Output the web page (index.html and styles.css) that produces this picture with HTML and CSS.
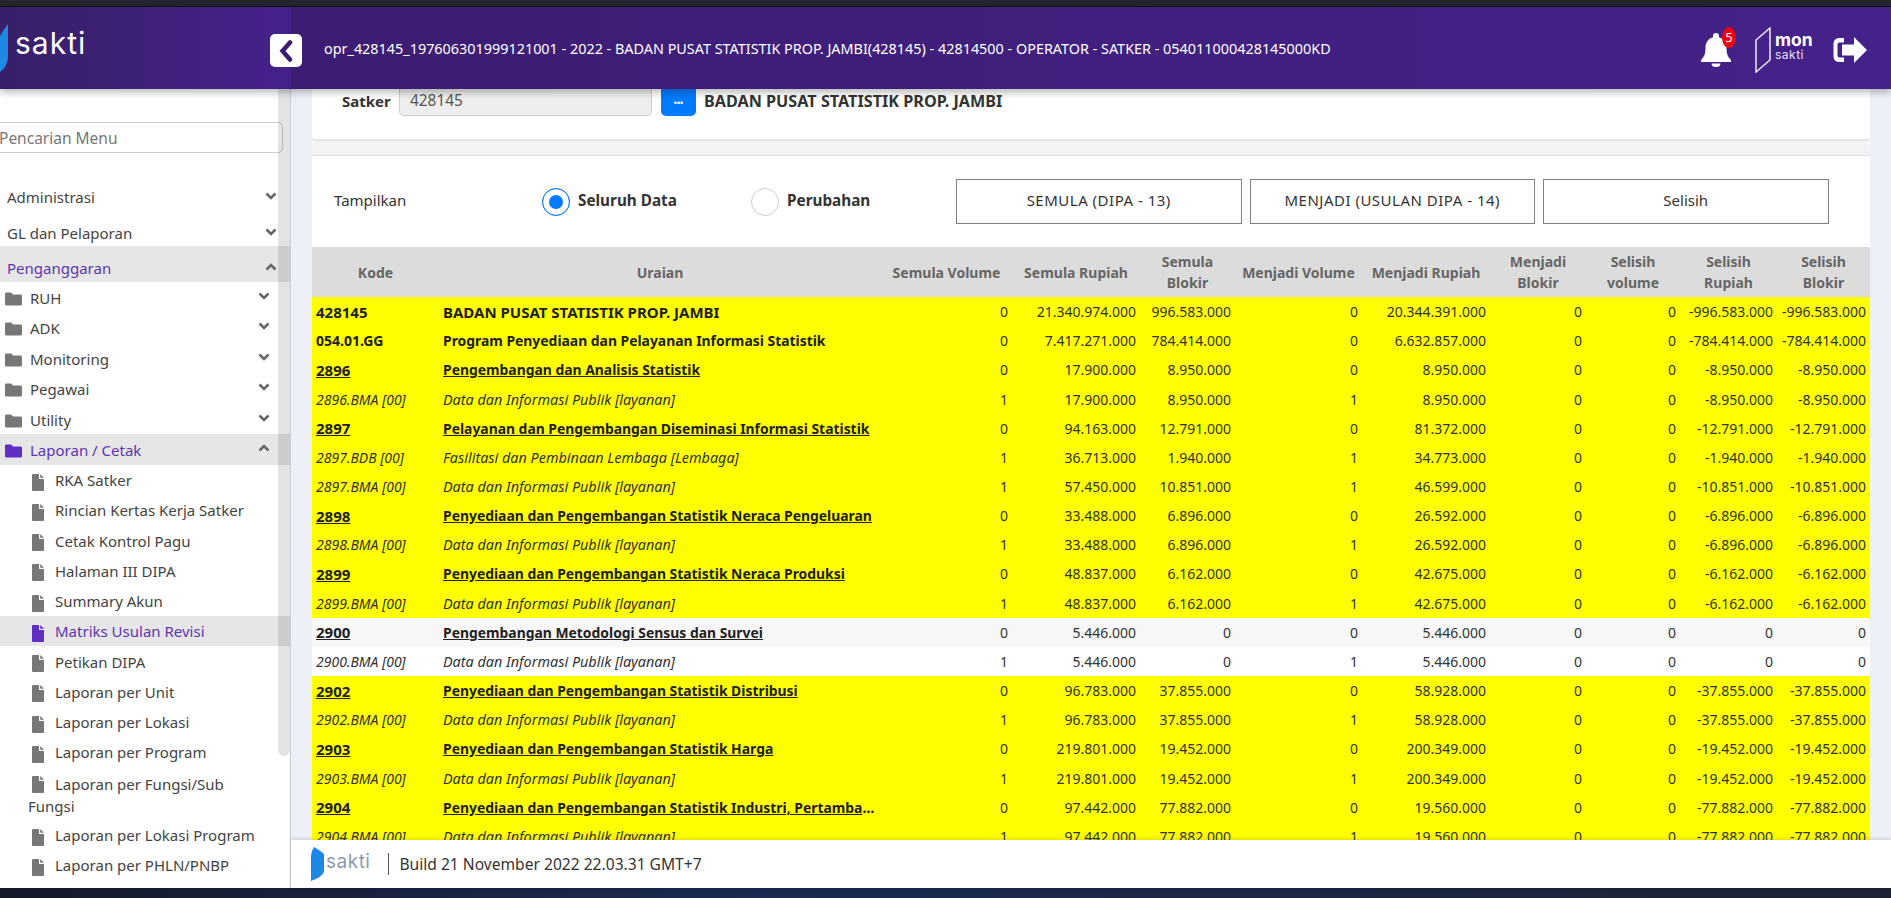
FILE: index.html
```html
<!DOCTYPE html>
<html lang="id">
<head>
    <meta charset="UTF-8">
    <title>SAKTI - Matriks Usulan Revisi</title>
    <link rel="stylesheet" href="styles.css">
</head>
<body>
    <svg class="icon-defs" width="0" height="0">
        <symbol id="i-down" viewBox="0 0 12 8"><path d="M1.5 1.500L6 6l4.500-4.500" fill="none" stroke="currentColor" stroke-width="2.600"/></symbol>
        <symbol id="i-up" viewBox="0 0 12 8"><path d="M1.500 6.500L6 2l4.500 4.500" fill="none" stroke="currentColor" stroke-width="2.600"/></symbol>
        <symbol id="i-folder" viewBox="0 0 18 14"><path d="M1.500 0h5l2 2.200h8A1.500 1.500 0 0 1 18 3.700v8.800A1.500 1.500 0 0 1 16.500 14h-15A1.500 1.500 0 0 1 0 12.500v-11A1.500 1.500 0 0 1 1.500 0z" fill="currentColor"/></symbol>
        <symbol id="i-file" viewBox="0 0 12 17"><path d="M0 1a1 1 0 0 1 1-1h6v5h5v11a1 1 0 0 1-1 1H1a1 1 0 0 1-1-1zM8.200 0L12 3.800H8.200z" fill="currentColor"/></symbol>
    </svg>

    <div class="strip-top"></div>

    <header class="topbar">
        <div class="brand">
            <svg class="brand-leaf" width="8" height="48" viewBox="0 0 8 48"><path d="M8 0v34q-1 9-8 14V12q4-7 8-12z" fill="#1e88e5"/></svg>
            <span class="brand-name">sakti</span>
            <button class="toggle">
                <svg width="16" height="22" viewBox="0 0 16 22"><path d="M12 2.500L4.500 11l7.500 8.500" fill="none" stroke="#3a1d6e" stroke-width="4.500" stroke-linecap="round"/></svg>
            </button>
        </div>
        <div class="user-info">opr_428145_197606301999121001 - 2022 - BADAN PUSAT STATISTIK PROP. JAMBI(428145) - 42814500 - OPERATOR - SATKER - 054011000428145000KD</div>
        <div class="top-actions">
            <div class="bell">
                <svg width="30" height="34" viewBox="0 0 30 34"><path d="M15 0a3 3 0 0 1 3 3v1.200C23 5.500 25.500 10 25.500 15c0 6 1.500 9 4.500 12v2H0v-2c3-3 4.500-6 4.500-12 0-5 2.500-9.500 7.500-10.800V3a3 3 0 0 1 3-3zM10.500 30.500h9a4.500 3.500 0 0 1-9 0z" fill="#fff"/></svg>
                <span class="badge">5</span>
            </div>
            <div class="mon">
                <svg width="16" height="46" viewBox="0 0 16 46"><path d="M1 13L15 1v32L1 45z" fill="none" stroke="#f0ecf8" stroke-width="1.500"/></svg>
                <div class="mon-text"><b>mon</b><span>sakti</span></div>
            </div>
            <svg class="exit" width="34" height="26" viewBox="0 0 34 26"><path d="M11 1H6a5.500 5.500 0 0 0-5.500 5.500v13A5.500 5.500 0 0 0 6 25h5v-4.500H6.500a2 2 0 0 1-2-2v-11a2 2 0 0 1 2-2H11z" fill="#fff"/><path d="M21 0l13 13-13 13v-7.500H9v-11h12z" fill="#fff"/></svg>
        </div>
    </header>

    <div class="layout">
        <aside class="sidebar">
            <div class="search"><input class="search-input" placeholder="Pencarian Menu"></div>
            <nav class="menu">
                <a class="menu-top">Administrasi<svg class="chev"><use href="#i-down"/></svg></a>
                <a class="menu-top">GL dan Pelaporan<svg class="chev"><use href="#i-down"/></svg></a>
                <a class="menu-top is-open">Penganggaran<svg class="chev"><use href="#i-up"/></svg></a>
                <a class="menu-sub"><svg class="folder"><use href="#i-folder"/></svg>RUH<svg class="chev"><use href="#i-down"/></svg></a>
                <a class="menu-sub"><svg class="folder"><use href="#i-folder"/></svg>ADK<svg class="chev"><use href="#i-down"/></svg></a>
                <a class="menu-sub"><svg class="folder"><use href="#i-folder"/></svg>Monitoring<svg class="chev"><use href="#i-down"/></svg></a>
                <a class="menu-sub"><svg class="folder"><use href="#i-folder"/></svg>Pegawai<svg class="chev"><use href="#i-down"/></svg></a>
                <a class="menu-sub"><svg class="folder"><use href="#i-folder"/></svg>Utility<svg class="chev"><use href="#i-down"/></svg></a>
                <a class="menu-sub is-open"><svg class="folder"><use href="#i-folder"/></svg>Laporan / Cetak<svg class="chev"><use href="#i-up"/></svg></a>
                <a class="menu-leaf"><svg class="file"><use href="#i-file"/></svg>RKA Satker</a>
                <a class="menu-leaf"><svg class="file"><use href="#i-file"/></svg>Rincian Kertas Kerja Satker</a>
                <a class="menu-leaf"><svg class="file"><use href="#i-file"/></svg>Cetak Kontrol Pagu</a>
                <a class="menu-leaf"><svg class="file"><use href="#i-file"/></svg>Halaman III DIPA</a>
                <a class="menu-leaf"><svg class="file"><use href="#i-file"/></svg>Summary Akun</a>
                <a class="menu-leaf is-open"><svg class="file"><use href="#i-file"/></svg>Matriks Usulan Revisi</a>
                <a class="menu-leaf"><svg class="file"><use href="#i-file"/></svg>Petikan DIPA</a>
                <a class="menu-leaf"><svg class="file"><use href="#i-file"/></svg>Laporan per Unit</a>
                <a class="menu-leaf"><svg class="file"><use href="#i-file"/></svg>Laporan per Lokasi</a>
                <a class="menu-leaf"><svg class="file"><use href="#i-file"/></svg>Laporan per Program</a>
                <a class="menu-leaf menu-wrap"><svg class="file"><use href="#i-file"/></svg>Laporan per Fungsi/Sub Fungsi</a>
                <a class="menu-leaf"><svg class="file"><use href="#i-file"/></svg>Laporan per Lokasi Program</a>
                <a class="menu-leaf"><svg class="file"><use href="#i-file"/></svg>Laporan per PHLN/PNBP</a>
            </nav>
            <div class="side-thumb"></div>
        </aside>

        <div class="main">
            <main class="content">
                <section class="card card-satker">
                    <label class="satker-label">Satker</label>
                    <div class="satker-input">428145</div>
                    <button class="satker-btn">&bull;&bull;&bull;</button>
                    <span class="satker-name">BADAN PUSAT STATISTIK PROP. JAMBI</span>
                </section>

                <section class="card">
                    <div class="card-head"></div>
                    <div class="filter">
                        <span class="filter-label">Tampilkan</span>
                        <div class="radio-group radio-first"><span class="radio checked"></span><b>Seluruh Data</b></div>
                        <div class="radio-group radio-second"><span class="radio"></span><b>Perubahan</b></div>
                        <div class="tab-boxes">
                            <div class="tab-box tab-caps">SEMULA (DIPA - 13)</div>
                            <div class="tab-box tab-caps">MENJADI (USULAN DIPA - 14)</div>
                            <div class="tab-box">Selisih</div>
                        </div>
                    </div>

                    <table class="matrix">
                        <colgroup>
                            <col class="c-kode"><col class="c-uraian"><col class="c-svol"><col class="c-srp"><col class="c-sblk"><col class="c-mvol"><col class="c-mrp"><col class="c-mblk"><col class="c-dvol"><col class="c-drp"><col class="c-dblk">
                        </colgroup>
                        <thead>
                            <tr><th>Kode</th><th>Uraian</th><th>Semula Volume</th><th>Semula Rupiah</th><th>Semula Blokir</th><th>Menjadi Volume</th><th>Menjadi Rupiah</th><th>Menjadi Blokir</th><th>Selisih volume</th><th>Selisih Rupiah</th><th>Selisih Blokir</th></tr>
                        </thead>
                        <tbody>
                            <tr class="hl head-row caps"><td>428145</td><td>BADAN PUSAT STATISTIK PROP. JAMBI</td><td>0</td><td>21.340.974.000</td><td>996.583.000</td><td>0</td><td>20.344.391.000</td><td>0</td><td>0</td><td>-996.583.000</td><td>-996.583.000</td></tr>
                            <tr class="hl head-row"><td>054.01.GG</td><td>Program Penyediaan dan Pelayanan Informasi Statistik</td><td>0</td><td>7.417.271.000</td><td>784.414.000</td><td>0</td><td>6.632.857.000</td><td>0</td><td>0</td><td>-784.414.000</td><td>-784.414.000</td></tr>
                            <tr class="hl keg"><td>2896</td><td>Pengembangan dan Analisis Statistik</td><td>0</td><td>17.900.000</td><td>8.950.000</td><td>0</td><td>8.950.000</td><td>0</td><td>0</td><td>-8.950.000</td><td>-8.950.000</td></tr>
                            <tr class="hl out"><td>2896.BMA [00]</td><td>Data dan Informasi Publik [layanan]</td><td>1</td><td>17.900.000</td><td>8.950.000</td><td>1</td><td>8.950.000</td><td>0</td><td>0</td><td>-8.950.000</td><td>-8.950.000</td></tr>
                            <tr class="hl keg"><td>2897</td><td>Pelayanan dan Pengembangan Diseminasi Informasi Statistik</td><td>0</td><td>94.163.000</td><td>12.791.000</td><td>0</td><td>81.372.000</td><td>0</td><td>0</td><td>-12.791.000</td><td>-12.791.000</td></tr>
                            <tr class="hl out"><td>2897.BDB [00]</td><td>Fasilitasi dan Pembinaan Lembaga [Lembaga]</td><td>1</td><td>36.713.000</td><td>1.940.000</td><td>1</td><td>34.773.000</td><td>0</td><td>0</td><td>-1.940.000</td><td>-1.940.000</td></tr>
                            <tr class="hl out"><td>2897.BMA [00]</td><td>Data dan Informasi Publik [layanan]</td><td>1</td><td>57.450.000</td><td>10.851.000</td><td>1</td><td>46.599.000</td><td>0</td><td>0</td><td>-10.851.000</td><td>-10.851.000</td></tr>
                            <tr class="hl keg"><td>2898</td><td>Penyediaan dan Pengembangan Statistik Neraca Pengeluaran</td><td>0</td><td>33.488.000</td><td>6.896.000</td><td>0</td><td>26.592.000</td><td>0</td><td>0</td><td>-6.896.000</td><td>-6.896.000</td></tr>
                            <tr class="hl out"><td>2898.BMA [00]</td><td>Data dan Informasi Publik [layanan]</td><td>1</td><td>33.488.000</td><td>6.896.000</td><td>1</td><td>26.592.000</td><td>0</td><td>0</td><td>-6.896.000</td><td>-6.896.000</td></tr>
                            <tr class="hl keg"><td>2899</td><td>Penyediaan dan Pengembangan Statistik Neraca Produksi</td><td>0</td><td>48.837.000</td><td>6.162.000</td><td>0</td><td>42.675.000</td><td>0</td><td>0</td><td>-6.162.000</td><td>-6.162.000</td></tr>
                            <tr class="hl out"><td>2899.BMA [00]</td><td>Data dan Informasi Publik [layanan]</td><td>1</td><td>48.837.000</td><td>6.162.000</td><td>1</td><td>42.675.000</td><td>0</td><td>0</td><td>-6.162.000</td><td>-6.162.000</td></tr>
                            <tr class="plain keg"><td>2900</td><td>Pengembangan Metodologi Sensus dan Survei</td><td>0</td><td>5.446.000</td><td>0</td><td>0</td><td>5.446.000</td><td>0</td><td>0</td><td>0</td><td>0</td></tr>
                            <tr class="out"><td>2900.BMA [00]</td><td>Data dan Informasi Publik [layanan]</td><td>1</td><td>5.446.000</td><td>0</td><td>1</td><td>5.446.000</td><td>0</td><td>0</td><td>0</td><td>0</td></tr>
                            <tr class="hl keg"><td>2902</td><td>Penyediaan dan Pengembangan Statistik Distribusi</td><td>0</td><td>96.783.000</td><td>37.855.000</td><td>0</td><td>58.928.000</td><td>0</td><td>0</td><td>-37.855.000</td><td>-37.855.000</td></tr>
                            <tr class="hl out"><td>2902.BMA [00]</td><td>Data dan Informasi Publik [layanan]</td><td>1</td><td>96.783.000</td><td>37.855.000</td><td>1</td><td>58.928.000</td><td>0</td><td>0</td><td>-37.855.000</td><td>-37.855.000</td></tr>
                            <tr class="hl keg"><td>2903</td><td>Penyediaan dan Pengembangan Statistik Harga</td><td>0</td><td>219.801.000</td><td>19.452.000</td><td>0</td><td>200.349.000</td><td>0</td><td>0</td><td>-19.452.000</td><td>-19.452.000</td></tr>
                            <tr class="hl out"><td>2903.BMA [00]</td><td>Data dan Informasi Publik [layanan]</td><td>1</td><td>219.801.000</td><td>19.452.000</td><td>1</td><td>200.349.000</td><td>0</td><td>0</td><td>-19.452.000</td><td>-19.452.000</td></tr>
                            <tr class="hl keg"><td>2904</td><td>Penyediaan dan Pengembangan Statistik Industri, Pertambangan dan Penggalian</td><td>0</td><td>97.442.000</td><td>77.882.000</td><td>0</td><td>19.560.000</td><td>0</td><td>0</td><td>-77.882.000</td><td>-77.882.000</td></tr>
                            <tr class="hl out"><td>2904.BMA [00]</td><td>Data dan Informasi Publik [layanan]</td><td>1</td><td>97.442.000</td><td>77.882.000</td><td>1</td><td>19.560.000</td><td>0</td><td>0</td><td>-77.882.000</td><td>-77.882.000</td></tr>
                        </tbody>
                    </table>
                </section>
            </main>

            <footer class="footer">
                <svg class="foot-leaf" width="13" height="34" viewBox="0 0 13 34"><path d="M3 0q7 4 10 7v18q-2 5-13 9V9q0-5 3-9z" fill="#1e88e5"/></svg>
                <span class="foot-name">sakti</span>
                <span class="foot-build">Build 21 November 2022 22.03.31 GMT+7</span>
            </footer>
        </div>
    </div>

    <div class="strip-bottom"></div>
</body>
</html>
```

FILE: styles.css
```css
* {
    box-sizing: border-box;
}
body {
    margin: 0;
    height: 898px;
    overflow: hidden;
    display: flex;
    flex-direction: column;
    font-family: "Noto Sans", "Open Sans", sans-serif;
    font-size: 14px;
    color: #333;
    background-color: #edf0f7;
}
.icon-defs {
    position: absolute;
}

.strip-top {
    height: 7px;
    flex: none;
    background-color: #27262e;
    border-bottom: 1px solid #111;
}
.strip-bottom {
    height: 10px;
    flex: none;
    background: linear-gradient(90deg, #141a2a, #1b2a52 40%, #1a2233);
}

/* barra superior */
.topbar {
    height: 82px;
    flex: none;
    display: flex;
    align-items: center;
    color: white;
    background: linear-gradient(90deg, #3a1c6e, #45228a);
    box-shadow: 0 3px 8px rgba(0, 0, 0, 0.3);
    position: relative;
    z-index: 2;
}
.brand {
    width: 291px;
    height: 100%;
    flex: none;
    display: flex;
    align-items: center;
    background: linear-gradient(90deg, #372068, #46218c);
}
.brand-leaf {
    margin: 0 7px 0 0;
}
.brand-name {
    font-family: "Inter", sans-serif;
    font-size: 30px;
    letter-spacing: 1px;
    margin-bottom: 10px;
}
.toggle {
    width: 32px;
    height: 33px;
    margin-top: 5px;
    margin-left: auto;
    margin-right: -11px;
    padding: 0;
    border: none;
    border-radius: 5px;
    background-color: white;
    display: flex;
    align-items: center;
    justify-content: center;
    position: relative;
}
.user-info {
    margin-left: 33px;
    white-space: nowrap;
    font-size: 14.400px;
}
.top-actions {
    margin-left: auto;
    margin-right: 24px;
    padding-top: 4px;
    display: flex;
    align-items: center;
}
.bell {
    position: relative;
    width: 30px;
    height: 34px;
}
.badge {
    position: absolute;
    top: -6px;
    left: 21px;
    width: 14px;
    height: 21px;
    border-radius: 50%;
    background-color: #ee0011;
    font-size: 13px;
    line-height: 21px;
    text-align: center;
}
.mon {
    display: flex;
    align-items: center;
    gap: 4px;
    margin-left: 24px;
}
.mon-text {
    width: 36px;
    display: flex;
    flex-direction: column;
    font-family: "Inter", sans-serif;
    margin-bottom: 8px;
}
.mon-text b {
    font-size: 17.500px;
    line-height: 17px;
}
.mon-text span {
    font-size: 12px;
    line-height: 13px;
    letter-spacing: 0.5px;
    color: #e6e0f2;
}
.exit {
    margin-left: 22px;
}

.layout {
    flex: 1;
    min-height: 0;
    display: flex;
}

/* menu lateral */
.sidebar {
    width: 291px;
    flex: none;
    position: relative;
    overflow: hidden;
    background-color: white;
    border-right: 1px solid #c9ccd6;
}
.side-thumb {
    position: absolute;
    top: 0;
    right: 0;
    width: 12px;
    height: 667px;
    border-radius: 0 0 6px 6px;
    background-color: rgba(0, 0, 0, 0.11);
}
.search {
    padding-top: 33px;
}
.search-input {
    display: block;
    width: 294px;
    height: 31px;
    margin-left: -11px;
    padding: 0 9px;
    border: 1px solid #ccc;
    border-radius: 5px;
    font-family: inherit;
    font-size: 15.500px;
}
.search-input::placeholder {
    color: #777;
}
.menu {
    margin-top: 22px;
    display: flex;
    flex-direction: column;
}
.menu a {
    display: block;
    position: relative;
    color: #444;
    font-size: 15px;
    line-height: 20px;
}
.menu-top {
    padding: 12px 0 3.500px 7px;
}
.menu-sub {
    padding: 6px 0 4.500px 30px;
}
.menu-leaf {
    padding: 5.500px 0 4.750px 55px;
}
.menu .menu-wrap {
    padding: 5.500px 40px 3px 28px;
    text-indent: 27px;
    line-height: 22px;
}
.menu a.is-open {
    color: #5e35b1;
    background-color: #e6e6e6;
}
.chev {
    position: absolute;
    top: 17px;
    right: 13px;
    width: 12px;
    height: 8px;
    color: #666;
}
.menu-sub .chev {
    top: 10px;
    right: 20px;
}
.folder {
    position: absolute;
    left: 5px;
    top: 10px;
    width: 17px;
    height: 14px;
    color: #777;
}
.file {
    position: absolute;
    left: 32px;
    top: 9px;
    width: 12px;
    height: 17px;
    color: #777;
}
.is-open .folder,
.is-open .file {
    color: #5e2fc0;
}

/* contenido */
.main {
    flex: 1;
    min-width: 0;
    display: flex;
    flex-direction: column;
}
.content {
    flex: 1;
    min-height: 0;
    overflow: hidden;
    padding: 0 21px;
}
.card {
    background-color: white;
}
.card-satker {
    height: 52px;
    display: flex;
    align-items: flex-start;
    padding-left: 30px;
    border-bottom: 2px solid #e4e4e4;
    border-radius: 0 0 4px 4px;
}
.satker-label {
    width: 57px;
    font-size: 15px;
    font-weight: bold;
    line-height: 24px;
    color: #333;
}
.satker-input {
    width: 253px;
    height: 27px;
    padding-left: 10px;
    line-height: 24px;
    font-size: 15.400px;
    background-color: #eee;
    border: 1px solid #ccc;
    border-top: none;
    border-radius: 0 0 5px 5px;
    color: #555;
}
.satker-btn {
    width: 35px;
    height: 27px;
    margin-left: 9px;
    border: none;
    border-radius: 0 0 5px 5px;
    background-color: #007bff;
    color: white;
    font-size: 9px;
    padding: 0;
}
.satker-name {
    margin-left: 8px;
    font-size: 16.200px;
    font-weight: bold;
    line-height: 24px;
    color: #333;
}
.card-head {
    height: 15px;
    background-color: #f3f3f3;
    border-bottom: 1px solid #e0e0e0;
    border-radius: 5px 5px 0 0;
}
.filter {
    height: 91px;
    display: flex;
    align-items: center;
    padding-left: 22px;
    font-size: 15px;
}
.filter-label {
    width: 208px;
    margin-bottom: 4px;
}
.radio-group {
    display: flex;
    align-items: center;
    gap: 8px;
    font-size: 15.300px;
    color: #333;
}
.radio-group b {
    margin-bottom: 4px;
}
.radio-first {
    width: 209px;
}
.radio-second {
    width: 205px;
}
.radio {
    width: 28px;
    height: 28px;
    flex: none;
    border-radius: 50%;
    border: 1px solid #ccc;
    background-color: white;
}
.radio.checked {
    border-color: #007bff;
    box-shadow: inset 0 0 0 6px white;
    background-color: #007bff;
}
.tab-boxes {
    display: flex;
    gap: 8px;
}
.tab-box {
    width: 285.500px;
    height: 45px;
    line-height: 41px;
    text-align: center;
    border: 1px solid #808080;
}
.tab-caps {
    letter-spacing: 0.5px;
}

/* tabla de matriz */
.matrix {
    width: 100%;
    table-layout: fixed;
    border-collapse: collapse;
}
.c-kode { width: 127px; }
.c-uraian { width: 442px; }
.c-svol { width: 131px; }
.c-srp { width: 128px; }
.c-sblk { width: 95px; }
.c-mvol { width: 127px; }
.c-mrp { width: 128px; }
.c-mblk { width: 96px; }
.c-dvol { width: 94px; }
.c-drp { width: 97px; }
.c-dblk { width: 93px; }
.matrix th {
    height: 50px;
    padding: 0 4px;
    background-color: #dcdcdc;
    color: #666;
    font-size: 14px;
    line-height: 21px;
    text-align: center;
}
.matrix td {
    height: 29.160px;
    padding: 0 4px;
    white-space: nowrap;
    overflow: hidden;
    text-overflow: ellipsis;
    text-align: right;
    color: #333;
    font-size: 14px;
}
.matrix td:nth-child(1),
.matrix td:nth-child(2) {
    text-align: left;
    color: #212121;
}
.hl td {
    background-color: #ffff00;
}
.plain td {
    background-color: #f7f7f7;
}
.head-row td:nth-child(1),
.head-row td:nth-child(2) {
    font-weight: bold;
}
.head-row td:nth-child(2) {
    font-size: 13.900px;
}
.keg td:nth-child(1),
.keg td:nth-child(2) {
    font-weight: bold;
    text-decoration: underline;
}
.keg td:nth-child(1),
.caps td:nth-child(1) {
    font-size: 15px;
}
.keg td:nth-child(2) {
    font-size: 13.900px;
}
.caps td:nth-child(2) {
    font-size: 15px;
}
.out td:nth-child(1),
.out td:nth-child(2) {
    font-style: italic;
    color: #333;
}
.out td:nth-child(2) {
    font-size: 14.400px;
}

.footer {
    height: 48px;
    flex: none;
    display: flex;
    align-items: center;
    padding-left: 20px;
    background-color: white;
    box-shadow: 0 -1px 4px rgba(0, 0, 0, 0.15);
    position: relative;
}
.foot-name {
    margin: 0 0 6px 2px;
    font-family: "Inter", sans-serif;
    font-size: 19px;
    letter-spacing: 0.5px;
    color: #8a9ab0;
}
.foot-build {
    margin-left: 18px;
    padding-left: 10px;
    border-left: 1px solid #555;
    line-height: 22px;
    font-size: 15.600px;
    color: #333;
}
```
